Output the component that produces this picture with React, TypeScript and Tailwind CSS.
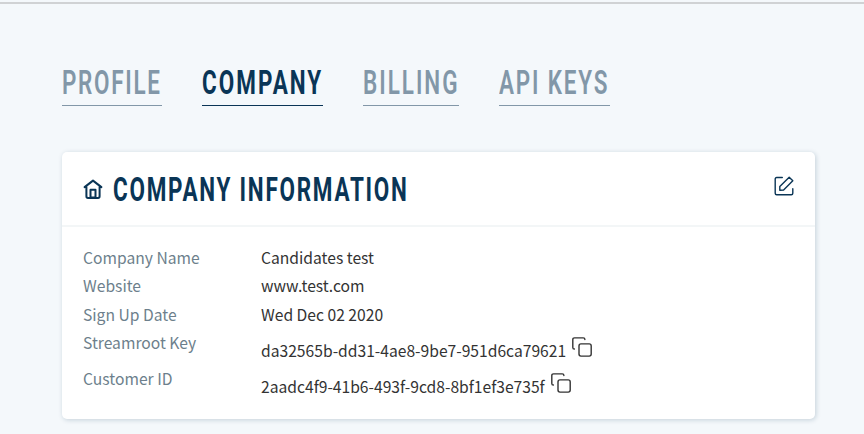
import type { ReactNode } from 'react';

const display =
  "block w-max origin-left scale-x-[0.66] whitespace-nowrap font-['Roboto',sans-serif] text-[34px] leading-[40px]";

const tabs = [
  { label: 'PROFILE', box: 'w-[100px]', spacing: 'tracking-[2.6px]' },
  { label: 'COMPANY', box: 'w-[121px]', spacing: 'tracking-[3.1px]', active: true },
  { label: 'BILLING', box: 'w-[96px]', spacing: 'tracking-[3px]' },
  { label: 'API KEYS', box: 'w-[111px]', spacing: 'tracking-[2.8px]' },
];

function HomeIcon() {
  return (
    <svg className="h-[22px] w-[20px] shrink-0" viewBox="0 0 20 22" fill="none" stroke="currentColor" strokeWidth="2" strokeLinecap="round" strokeLinejoin="round">
      <path d="M1.6 9.1 10 2.6l8.4 6.5M3.4 9.1v9.2q0 1.6 1.6 1.6h10q1.6 0 1.6-1.6V9.1" />
      <path d="M7.5 19.6v-7.8h5v7.8z" />
    </svg>
  );
}

function EditIcon() {
  return (
    <svg className="h-[20px] w-[20px]" viewBox="0 0 20 20" fill="none" stroke="currentColor" strokeWidth="1.4" strokeLinecap="round" strokeLinejoin="round">
      <path d="M8.3 1.5H2.7Q1.2 1.5 1.2 3v14.3q0 1.5 1.5 1.5h14.6q1.5 0 1.5-1.5v-4.6" />
      <path d="M5.8 14.3v-3.9l9.4-9.2 3.6 3.6-9.2 9.3z" />
    </svg>
  );
}

function CopyIcon() {
  return (
    <svg className="h-[20px] w-[20px] shrink-0" viewBox="0 0 20 20" fill="none" stroke="currentColor" strokeWidth="1.4" strokeLinecap="round">
      <path d="M2.4 12q-1.6 0-1.6-1.6V2.6Q.8.9 2.5.9h8.7q1.7 0 1.7 1.7" />
      <rect x="7" y="6.9" width="12.2" height="12.2" rx="2" />
    </svg>
  );
}

function Row({ label, children, tall }: { label: string; children: ReactNode; tall?: boolean }) {
  return (
    <div className={tall ? 'flex h-[36px]' : 'flex h-[28.4px]'}>
      <dt className="w-[178px] shrink-0 leading-[28px] text-[#6d7f8c]">{label}</dt>
      <dd className={tall ? 'flex gap-[6px] pt-[8px] leading-[28px] text-[#333]' : 'leading-[28px] text-[#333]'}>{children}</dd>
    </div>
  );
}

export default function App() {
  return (
    <main className="h-[434px] overflow-hidden bg-[#f4f8fb] font-['Noto_Sans_CJK_SC',sans-serif] text-[15.65px]">
      <div className="h-[4px] border-b-2 border-[#d0d2d4]" />
      <nav className="flex gap-[40px] pt-[58px] pl-[62px]">
        {tabs.map((t) => (
          <a
            key={t.label}
            className={`${t.box} h-[44px] border-b ${t.active ? 'border-[#0a3556] font-bold text-[#0a3556]' : 'border-[#8297a8] font-semibold text-[#8297a8]'}`}
          >
            <span className={`${display} ${t.spacing}`}>{t.label}</span>
          </a>
        ))}
      </nav>
      <section className="mt-[46px] ml-[62px] h-[267px] w-[753px] rounded-[5px] bg-white shadow-[1px_1px_5px_rgba(10,53,86,0.2)]">
        <header className="flex h-[75px] items-center border-b-2 border-[#f3f6f7] pr-[21px] pl-[21px] text-[#0a3556]">
          <HomeIcon />
          <h1 className="ml-[10px] w-[300px]">
            <span className={`${display} font-bold tracking-[2.65px]`}>COMPANY INFORMATION</span>
          </h1>
          <button className="mb-[6px] ml-auto">
            <EditIcon />
          </button>
        </header>
        <dl className="px-[21px] pt-[17px]">
          <Row label="Company Name">Candidates test</Row>
          <Row label="Website">www.test.com</Row>
          <Row label="Sign Up Date">Wed Dec 02 2020</Row>
          <Row label="Streamroot Key" tall>
            <span>da32565b-dd31-4ae8-9be7-951d6ca79621</span>
            <CopyIcon />
          </Row>
          <Row label="Customer ID" tall>
            <span>2aadc4f9-41b6-493f-9cd8-8bf1ef3e735f</span>
            <CopyIcon />
          </Row>
        </dl>
      </section>
    </main>
  );
}
